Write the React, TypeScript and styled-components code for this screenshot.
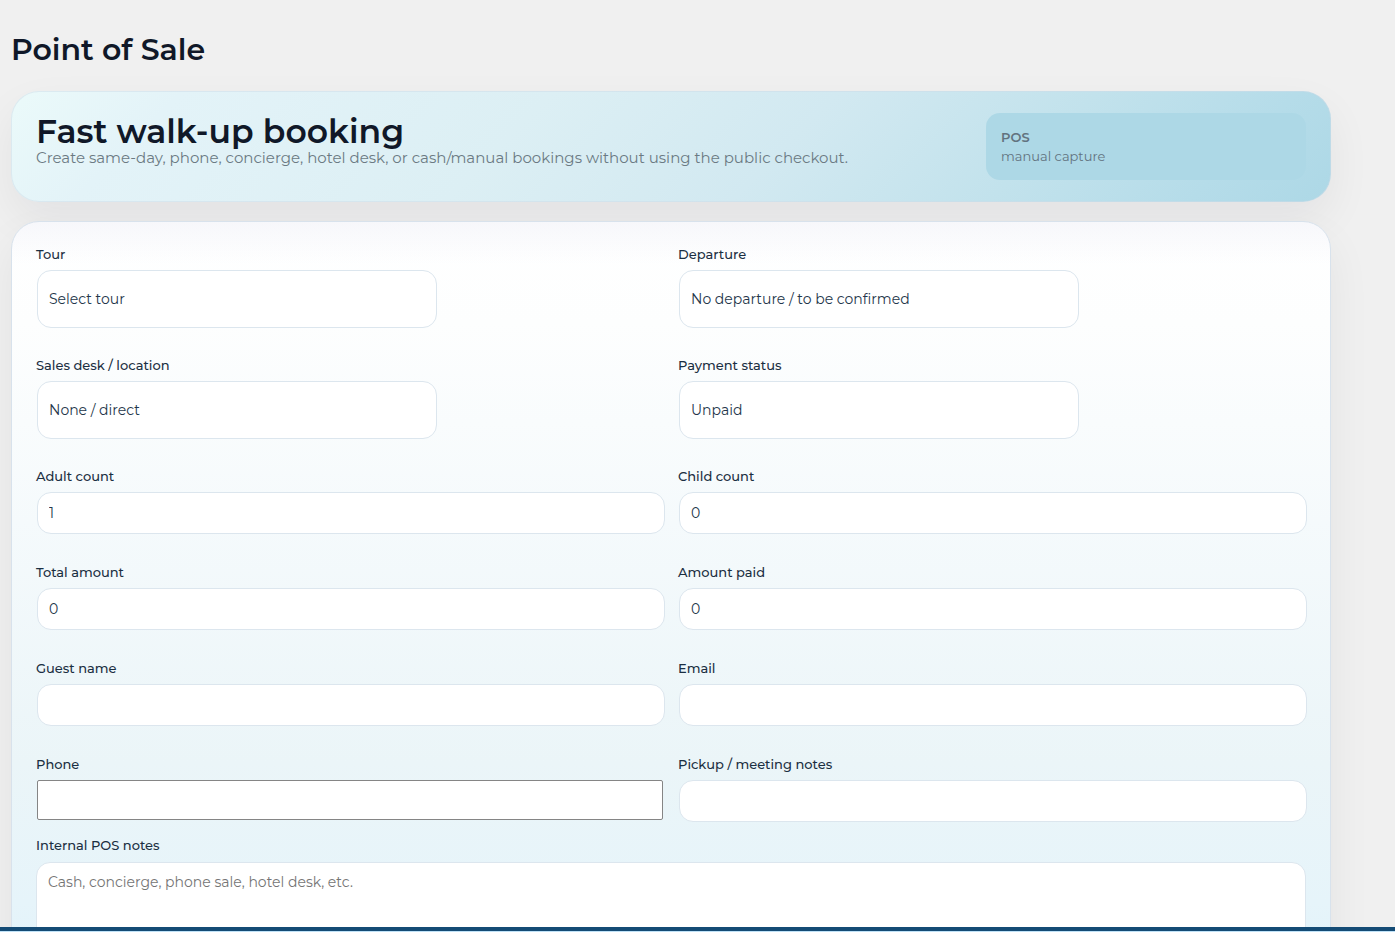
import React from "react";
import styled, { createGlobalStyle } from "styled-components";

const GlobalStyle = createGlobalStyle`
  *, *::before, *::after { box-sizing: border-box; }
  html, body { margin: 0; background: #f0f0f0; }
  body, input, select, textarea {
    font-family: Montserrat, Inter, "Open Sans", sans-serif;
  }
`;

const Shell = styled.div`
  display: flex;
  flex-direction: column;
  height: 100vh;
  color: #101828;
`;

const Main = styled.main`
  flex: 1;
  min-height: 0;
  overflow: auto;
  scrollbar-width: none;
  padding: 30px 64px 24px 11px;
`;

const BottomBar = styled.footer`
  flex: none;
  height: 5px;
  background: #144b75;
  border-bottom: 1px solid #c0e2f7;
`;

const PageTitle = styled.h1`
  margin: 0 0 21px;
  font-size: 30px;
  line-height: 40px;
  font-weight: 600;
`;

const Hero = styled.section`
  display: flex;
  justify-content: space-between;
  gap: 24px;
  padding: 21px 24px;
  border: 1px solid rgba(205, 220, 232, 0.5);
  border-radius: 28px;
  background: linear-gradient(135deg, #ebfafa 0%, #e3f3f8 12%, #dceff4 38%, #d2e9f1 58%, #c2e2ec 76%, #b5dce9 90%, #add8e6 100%) border-box;
  box-shadow: 0 18px 45px rgba(15, 23, 42, 0.06);
`;

const HeroTitle = styled.h2`
  margin: 0;
  font-size: 33px;
  line-height: 36px;
  font-weight: 600;
`;

const HeroText = styled.p`
  margin: 0;
  font-size: 15px;
  line-height: 18px;
  font-weight: 400;
  color: #6b7a83;
`;

const Badge = styled.div`
  width: 320px;
  padding: 15px 15px 14px;
  border-radius: 14px;
  background: #add8e6;
  color: #62737f;
  font-size: 13px;
  line-height: 19px;
  font-weight: 400;
`;

const BadgeTitle = styled.strong`
  display: block;
  font-weight: 600;
`;

const Card = styled.form`
  margin-top: 19px;
  padding: 23px 24px 24px;
  border: 1px solid #d8e2ec;
  border-radius: 28px;
  background:
    linear-gradient(180deg, rgba(240, 241, 248, 0.55) 0, rgba(255, 255, 255, 0) 42px),
    linear-gradient(180deg, #ffffff 0, #fdfefe 100px, #f5fafc 300px, #ebf5f8 540px, #e6f4fa 680px, #e0f2f9 100%);
  box-shadow: 0 18px 45px rgba(15, 23, 42, 0.06);
`;

const FieldGrid = styled.div`
  display: grid;
  grid-template-columns: 1fr 1fr;
  gap: 14px;
`;

const Field = styled.div<{ $after: number }>`
  display: flex;
  flex-direction: column;
  gap: 7px;
  padding-bottom: ${({ $after }) => $after}px;
`;

const Label = styled.label`
  font-size: 13px;
  line-height: 18px;
  font-weight: 500;
  color: #1b2f42;
`;

const Input = styled.input<{ $plain?: boolean }>`
  width: 100%;
  height: ${({ $plain }) => ($plain ? 40 : 42)}px;
  padding: 0 11px;
  border: 1px solid ${({ $plain }) => ($plain ? "#858585" : "#dce6ee")};
  border-radius: ${({ $plain }) => ($plain ? 2 : 14)}px;
  background: #fff;
  color: #24364a;
  font-size: 14px;
  font-weight: 400;
  outline: 0;
  appearance: textfield;

  &::-webkit-inner-spin-button { appearance: none; margin: 0; }
`;

const Select = styled.select`
  appearance: none;
  width: 400px;
  max-width: 100%;
  height: 58px;
  padding: 0 11px;
  border: 1px solid #dce6ee;
  border-radius: 14px;
  background: #fff;
  color: #24364a;
  font-size: 14px;
  font-weight: 400;
`;

const Control = styled.div<{ $inset?: number }>`
  display: flex;
  margin: 0 -1px 0 1px;
  padding-right: ${({ $inset = 0 }) => $inset}px;
`;

const NotesField = styled.div`
  display: flex;
  flex-direction: column;
  gap: 8px;
  margin-top: 14px;
`;

const TextArea = styled.textarea`
  width: 100%;
  height: 110px;
  padding: 9px 11px;
  border: 1px solid #dce6ee;
  border-radius: 14px;
  background: #fff;
  color: #24364a;
  font-size: 14px;
  line-height: 20px;
  font-weight: 400;
  resize: vertical;

  &::placeholder { color: #757575; }
`;

type FieldSpec = {
  id: string;
  label: string;
  option?: string;
  value?: string;
  type?: string;
  plain?: boolean;
  last?: boolean;
};

const fields: FieldSpec[] = [
  { id: "tour", label: "Tour", option: "Select tour" },
  { id: "departure", label: "Departure", option: "No departure / to be confirmed" },
  { id: "desk", label: "Sales desk / location", option: "None / direct" },
  { id: "status", label: "Payment status", option: "Unpaid" },
  { id: "adults", label: "Adult count", value: "1", type: "number" },
  { id: "children", label: "Child count", value: "0", type: "number" },
  { id: "total", label: "Total amount", value: "0", type: "number" },
  { id: "paid", label: "Amount paid", value: "0", type: "number" },
  { id: "guest", label: "Guest name", type: "text" },
  { id: "email", label: "Email", type: "email" },
  { id: "phone", label: "Phone", type: "tel", plain: true, last: true },
  { id: "pickup", label: "Pickup / meeting notes", type: "text", last: true },
];

const spaceAfter = (f: FieldSpec) => (f.last ? 0 : f.option ? 14 : 15);

export default function App() {
  return (
    <Shell>
      <GlobalStyle />
      <Main>
        <PageTitle>Point of Sale</PageTitle>
        <Hero>
          <div>
            <HeroTitle>Fast walk-up booking</HeroTitle>
            <HeroText>
              Create same-day, phone, concierge, hotel desk, or cash/manual bookings without using the public checkout.
            </HeroText>
          </div>
          <Badge>
            <BadgeTitle>POS</BadgeTitle>
            manual capture
          </Badge>
        </Hero>
        <Card>
          <FieldGrid>
            {fields.map((f) => (
              <Field key={f.id} $after={spaceAfter(f)}>
                <Label htmlFor={f.id}>{f.label}</Label>
                <Control $inset={f.plain ? 2 : 0}>
                  {f.option ? (
                    <Select id={f.id}>
                      <option>{f.option}</option>
                    </Select>
                  ) : (
                    <Input id={f.id} type={f.type} defaultValue={f.value} $plain={f.plain} />
                  )}
                </Control>
              </Field>
            ))}
          </FieldGrid>
          <NotesField>
            <Label htmlFor="notes">Internal POS notes</Label>
            <TextArea id="notes" placeholder="Cash, concierge, phone sale, hotel desk, etc." />
          </NotesField>
        </Card>
      </Main>
      <BottomBar />
    </Shell>
  );
}
